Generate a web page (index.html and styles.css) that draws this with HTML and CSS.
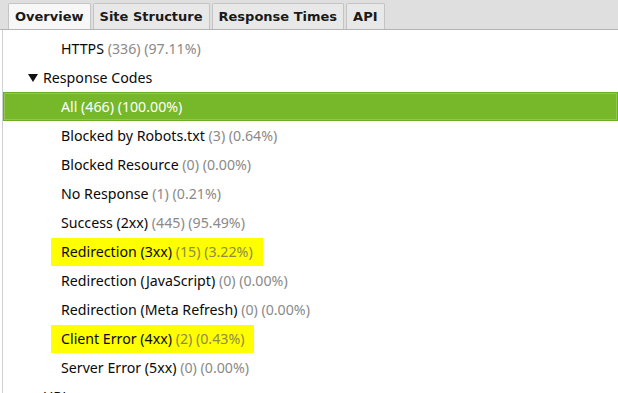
FILE: index.html
```html
<!DOCTYPE html>
<html lang="en">

<head>
  <meta charset="UTF-8">
  <title>Overview</title>
  <link rel="stylesheet" href="styles.css">
</head>

<body>
  <div class="tabs">
    <div class="tab active">Overview</div>
    <div class="tab">Site Structure</div>
    <div class="tab">Response Times</div>
    <div class="tab">API</div>
  </div>

  <div class="tree">
    <div class="row leaf"><span class="label">HTTPS <span class="count">(336) (97.11%)</span></span></div>
    <div class="row group"><svg class="arrow" width="10" height="8" viewBox="0 0 10 8"><path d="M0 0h10L5 8z" fill="#111"/></svg><span class="label">Response Codes</span></div>
    <div class="row leaf selected"><span class="label">All <span class="count">(466) (100.00%)</span></span></div>
    <div class="row leaf"><span class="label">Blocked by Robots.txt <span class="count">(3) (0.64%)</span></span></div>
    <div class="row leaf"><span class="label">Blocked Resource <span class="count">(0) (0.00%)</span></span></div>
    <div class="row leaf"><span class="label">No Response <span class="count">(1) (0.21%)</span></span></div>
    <div class="row leaf"><span class="label">Success (2xx) <span class="count">(445) (95.49%)</span></span></div>
    <div class="row leaf"><span class="label hl">Redirection (3xx) <span class="count">(15) (3.22%)</span></span></div>
    <div class="row leaf"><span class="label">Redirection (JavaScript) <span class="count">(0) (0.00%)</span></span></div>
    <div class="row leaf"><span class="label">Redirection (Meta Refresh) <span class="count">(0) (0.00%)</span></span></div>
    <div class="row leaf"><span class="label hl">Client Error (4xx) <span class="count">(2) (0.43%)</span></span></div>
    <div class="row leaf"><span class="label">Server Error (5xx) <span class="count">(0) (0.00%)</span></span></div>
    <div class="row group"><svg class="arrow" width="10" height="8" viewBox="0 0 10 8"><path d="M0 0h10L5 8z" fill="#111"/></svg><span class="label">URL</span></div>
  </div>
</body>

</html>
```

FILE: styles.css
```css
body {
  margin: 0;
  padding: 0;
  background-color: #fff;
  font-family: 'Noto Sans', Arial, sans-serif;
  overflow: hidden;
}

.tabs {
  display: flex;
  align-items: flex-end;
  gap: 2px;
  height: 29px;
  padding-left: 8px;
  background-color: #dfdfdf;
  border-bottom: 1px solid #b4b4b4;
}

.tab {
  height: 25px;
  line-height: 25px;
  padding: 0 6px;
  font-family: 'DejaVu Sans', Verdana, sans-serif;
  font-weight: bold;
  font-size: 13px;
  color: #1a1a1a;
  background-color: #e8e8e8;
  border: 1px solid #c4c4c4;
  border-bottom: none;
  border-radius: 2px 2px 0 0;
}

.tab.active {
  background-color: #f7f7f7;
}

.tree {
  margin-left: 2px;
  border-left: 1px solid #d0d0d0;
  padding-top: 4px;
}

.row {
  height: 29px;
  display: flex;
  align-items: center;
  font-size: 14.2px;
  color: #0a0a0a;
  white-space: nowrap;
}

.row.leaf {
  padding-left: 58px;
}

.row.group {
  padding-left: 25px;
}

.arrow {
  margin-right: 5px;
}

.count {
  color: #8a8a8a;
}

.row.selected {
  background-color: #76b82a;
  box-shadow: inset 0 0 0 1px #6cae22, inset 0 0 0 2px #90c850;
  color: #fff;
}

.row.selected .count {
  color: #fff;
}

.hl {
  background-color: #ffff00;
  margin-left: -10px;
  padding: 4px 10px 5px 10px;
}

.hl .count {
  color: #8c8c46;
}
```
